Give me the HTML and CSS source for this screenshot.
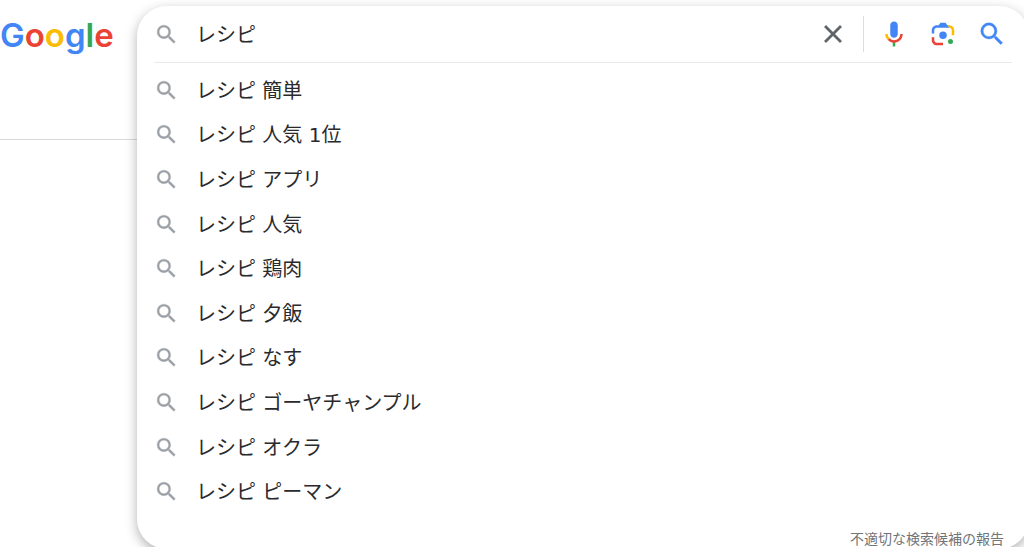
FILE: index.html
```
<!DOCTYPE html>
<html lang="ja">
<head>
  <meta charset="UTF-8">
  <meta name="viewport" content="width=device-width, initial-scale=1.0">
  <title>レシピ - Google</title>
  <link rel="stylesheet" href="styles.css">
</head>
<body>
  <!-- shared search icon -->
  <svg class="symbols" aria-hidden="true">
    <symbol id="search" viewBox="0 0 24 24">
      <path fill="currentColor" stroke="currentColor" stroke-width="0.3" d="M15.5 14h-.79l-.28-.27A6.471 6.471 0 0 0 16 9.5 6.5 6.5 0 1 0 9.5 16c1.61 0 3.09-.59 4.23-1.57l.27.28v.79l5 4.99L20.49 19l-4.99-5zm-6 0C7.01 14 5 11.99 5 9.5S7.01 5 9.5 5 14 7.01 14 9.5 11.99 14 9.5 14z"/>
    </symbol>
  </svg>

  <div class="page">
    <header class="side">
      <a class="logo" href="#" aria-label="Google"><span class="blue">G</span><span class="red">o</span><span class="yellow">o</span><span class="blue">g</span><span class="green">l</span><span class="red">e</span></a>
    </header>

    <main class="panel">
      <form class="search-bar">
        <svg class="icon"><use href="#search"/></svg>
        <input class="query" type="text" value="レシピ" aria-label="検索">
        <button class="tool clear" type="reset" aria-label="クリア">
          <svg viewBox="0 0 24 24"><path fill="currentColor" stroke="currentColor" stroke-width="0.3" d="M19 6.41L17.59 5 12 10.59 6.41 5 5 6.41 10.59 12 5 17.59 6.41 19 12 13.41 17.59 19 19 17.59 13.41 12z"/></svg>
        </button>
        <span class="separator"></span>
        <div class="tools">
          <button class="tool" type="button" aria-label="音声で検索">
            <svg viewBox="0 0 24 24">
              <path fill="#4285f4" d="m12 15c1.66 0 3-1.31 3-2.97v-7.02c0-1.66-1.34-3.01-3-3.01s-3 1.34-3 3.01v7.02c0 1.66 1.34 2.97 3 2.97z"/>
              <path fill="#34a853" d="m11 18.08h2v3.92h-2z"/>
              <path fill="#fbbc04" d="m7.05 16.87c-1.27-1.33-2.05-2.83-2.05-4.87h2c0 1.45 0.56 2.42 1.47 3.38v0.32l-1.15 1.18z"/>
              <path fill="#ea4335" d="m12 16.93a4.97 5.25 0 0 1 -3.54 -1.55l-1.41 1.49c1.26 1.34 3.02 2.13 4.95 2.13 3.87 0 6.99-2.92 6.99-7h-1.99c0 2.92-2.24 4.93-5 4.93z"/>
            </svg>
          </button>
          <button class="tool" type="button" aria-label="画像で検索">
            <svg viewBox="0 0 192 192">
              <circle fill="#34a853" cx="144" cy="144" r="16"/>
              <circle fill="#4285f4" cx="96" cy="104" r="24"/>
              <path fill="#ea4335" d="M24 135.2c0 18.11 14.69 32.8 32.8 32.8H96v-16l-40.1-.1c-8.8 0-15.9-8.19-15.9-17.9v-18H24v19.2z"/>
              <path fill="#fbbc04" d="M168 72.8c0-18.11-14.69-32.8-32.8-32.8H116l20 16c8.8 0 16 8.29 16 18v30h16V72.8z"/>
              <path fill="#4285f4" d="M112 24H80L68 40H56.8C38.69 40 24 54.69 24 72.8V92h16V74c0-9.71 7.2-18 16-18h80l-12-16-12-16z"/>
            </svg>
          </button>
          <button class="tool submit" type="submit" aria-label="Google 検索">
            <svg><use href="#search"/></svg>
          </button>
        </div>
      </form>

      <ul class="suggestions">
        <li><svg class="icon"><use href="#search"/></svg><a href="#">レシピ 簡単</a></li>
        <li><svg class="icon"><use href="#search"/></svg><a href="#">レシピ 人気 1位</a></li>
        <li><svg class="icon"><use href="#search"/></svg><a href="#">レシピ アプリ</a></li>
        <li><svg class="icon"><use href="#search"/></svg><a href="#">レシピ 人気</a></li>
        <li><svg class="icon"><use href="#search"/></svg><a href="#">レシピ 鶏肉</a></li>
        <li><svg class="icon"><use href="#search"/></svg><a href="#">レシピ 夕飯</a></li>
        <li><svg class="icon"><use href="#search"/></svg><a href="#">レシピ なす</a></li>
        <li><svg class="icon"><use href="#search"/></svg><a href="#">レシピ ゴーヤチャンプル</a></li>
        <li><svg class="icon"><use href="#search"/></svg><a href="#">レシピ オクラ</a></li>
        <li><svg class="icon"><use href="#search"/></svg><a href="#">レシピ ピーマン</a></li>
      </ul>

      <a class="report" href="#">不適切な検索候補の報告</a>
    </main>
  </div>
</body>
</html>
```
FILE: styles.css
```
* {
  box-sizing: border-box;
}

body {
  margin: 0;
  overflow: hidden;
  background: #fff;
  color: #2a2a2d;
  font-family: "DejaVu Sans", "Noto Sans CJK JP", sans-serif;
  font-size: 20px;
}

a {
  color: inherit;
  text-decoration: none;
}

.symbols {
  display: none;
}

.page {
  display: flex;
  align-items: flex-start;
  height: 100vh;
}

/* logo column, closed by the results page rule */
.side {
  flex: 0 0 137px;
  height: 140px;
  padding-top: 11px;
  border-bottom: 1px solid #d8dadd;
}

.logo {
  display: block;
  font-family: Inter, sans-serif;
  font-size: 33px;
  font-weight: 600;
  line-height: 48px;
}

.blue {
  color: #4285f4;
}

.red {
  color: #ea4335;
}

.yellow {
  color: #fbbc05;
}

.green {
  color: #34a853;
}

.panel {
  flex: 1;
  display: flex;
  flex-direction: column;
  height: calc(100vh - 4px);
  margin: 6px -5px 0 0;
  padding: 0 17px;
  border-radius: 30px;
  background: #fff;
  box-shadow: 0 4px 12px rgba(32, 33, 36, 0.35);
}

.search-bar {
  display: flex;
  align-items: center;
  gap: 15px;
  height: 57px;
  border-bottom: 1px solid #e8eaed;
}

.icon {
  flex: none;
  width: 25px;
  height: 25px;
  color: #9aa0a6;
}

.query {
  flex: 1;
  min-width: 0;
  padding: 0 0 2px 2px;
  border: 0;
  outline: 0;
  background: none;
  color: inherit;
  font: inherit;
}

.tool {
  display: block;
  width: 30px;
  height: 30px;
  padding: 0;
  border: 0;
  background: none;
  cursor: pointer;
}

.tool svg {
  display: block;
  width: 100%;
  height: 100%;
}

.clear {
  color: #5f6368;
}

.submit {
  color: #4285f4;
}

.separator {
  width: 1px;
  height: 36px;
  background: #dadce0;
}

.tools {
  display: flex;
  gap: 19px;
  padding-right: 5px;
}

.suggestions {
  flex: 1;
  display: flex;
  flex-direction: column;
  margin: 0;
  padding: 5px 0 0;
  list-style: none;
}

.suggestions li {
  flex: 1;
  display: flex;
  align-items: center;
  gap: 17px;
}

.suggestions a {
  padding-bottom: 2px;
}

.report {
  align-self: flex-end;
  margin-top: 15px;
  padding: 0 8px 0 0;
  color: #70757a;
  font-size: 14px;
  line-height: 20px;
}
```
